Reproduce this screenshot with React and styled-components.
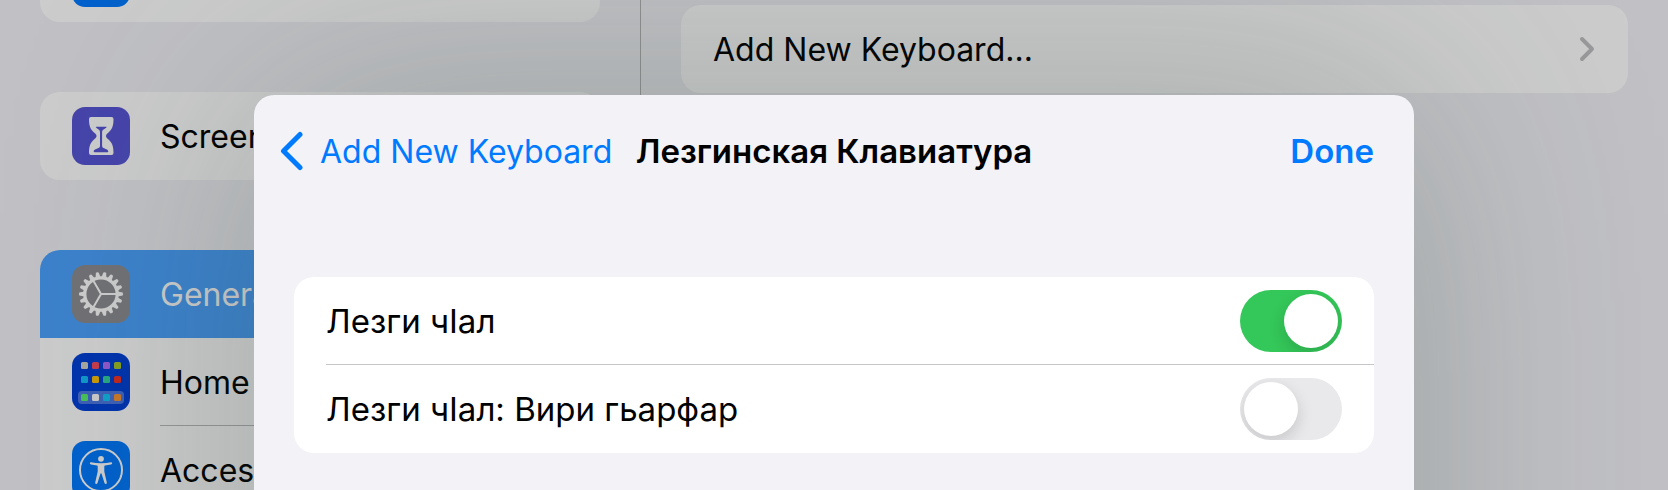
import React, { useState } from "react";
import styled, { createGlobalStyle } from "styled-components";

const GlobalStyle = createGlobalStyle`
  *, *::before, *::after { box-sizing: border-box; }
  body {
    margin: 0;
    background: #f2f2f7;
    color: #000;
    font-family: Inter, "Liberation Sans", sans-serif;
    font-size: 32px;
    line-height: 40px;
  }
`;

const Screen = styled.div`
  position: relative;
  display: flex;
  height: 100vh;
  overflow: hidden;
`;

const Sidebar = styled.nav`
  flex: 0 0 641px;
  border-right: 1px solid #b4b4b6;
  padding: 0 40px;
  overflow: hidden;
`;

/* The list is scrolled, so its first card is partly above the window. */
const SidebarList = styled.div`
  display: flex;
  flex-direction: column;
  gap: 70px;
  margin-top: -66px;
`;

const Detail = styled.main`
  flex: 1;
  min-width: 0;
  padding: 5px 40px;
`;

const Card = styled.div`
  background: #fff;
  border-radius: 20px;
  overflow: hidden;
`;

const NavRow = styled.a`
  display: flex;
  align-items: center;
  gap: 30px;
  height: 88px;
  padding-left: 32px;
  color: ${(p) => (p.$selected ? "#fff" : "#000")};
  background: ${(p) => (p.$selected ? "#4ca3ff" : "transparent")};
  text-decoration: none;
  white-space: nowrap;
`;

const NavLabel = styled.span`
  flex: 1;
  display: flex;
  align-items: center;
  align-self: stretch;
  padding-top: 2px;
  border-bottom: ${(p) => (p.$divided ? "1px solid #bcbcbe" : "none")};
`;

const RowLabel = styled.span`
  padding-top: 2px;
`;

const AppIcon = styled.svg.attrs({ viewBox: "0 0 58 58", "aria-hidden": true })`
  flex: none;
  width: 58px;
  height: 58px;
  border-radius: 13px;
  background: ${(p) => p.$color};
`;

const DetailRow = styled.button`
  display: flex;
  align-items: center;
  justify-content: space-between;
  width: 100%;
  height: 88px;
  padding: 0 32px;
  border: 0;
  background: none;
  color: inherit;
  font: inherit;
`;

const Backdrop = styled.div`
  position: absolute;
  inset: 0;
  background: rgba(0, 0, 0, 0.2);
`;

const Sheet = styled.section`
  position: absolute;
  top: 95px;
  left: 0;
  right: 0;
  max-width: 1160px;
  min-height: 200vh;
  margin: 0 auto;
  padding: 0 40px;
  border-radius: 20px;
  background: #f2f2f7;
  box-shadow: 0 0 250px rgba(50, 74, 64, 0.28);
`;

const SheetHeader = styled.header`
  display: grid;
  grid-template-columns: 1fr auto 1fr;
  align-items: center;
  height: 112px;
  margin-bottom: 70px;
  white-space: nowrap;
`;

const SheetTitle = styled.h1`
  margin: 0;
  font-size: 33px;
  font-weight: 600;
`;

const BackButton = styled.button`
  display: flex;
  align-items: center;
  gap: 16px;
  justify-self: start;
  margin-left: -16px;
  padding: 0;
  border: 0;
  background: none;
  color: #007aff;
  font: inherit;
`;

const DoneButton = styled.button`
  justify-self: end;
  padding: 0;
  border: 0;
  background: none;
  color: #007aff;
  font: inherit;
  font-size: 33px;
  font-weight: 600;
`;

const SwitchRow = styled.label`
  display: flex;
  align-items: center;
  justify-content: space-between;
  height: 88px;
  margin-left: 32px;
  padding-right: 32px;
  font-size: 33px;
  & + & { box-shadow: 0 -1px #c6c6c8; }
`;

const Switch = styled.input.attrs({ type: "checkbox", role: "switch" })`
  appearance: none;
  display: flex;
  width: 102px;
  height: 62px;
  margin: 0;
  padding: 4px;
  border-radius: 31px;
  overflow: hidden;
  background: #e9e9eb;
  &::before {
    content: "";
    width: 54px;
    height: 54px;
    border-radius: 50%;
    background: #fff;
    box-shadow: 0 6px 16px rgba(0, 0, 0, 0.15);
  }
  &:checked {
    justify-content: flex-end;
    background: #34c759;
  }
`;

const Chevron = styled.svg`
  flex: none;
  fill: none;
  stroke: ${(p) => p.$color};
  stroke-linecap: round;
  stroke-linejoin: round;
`;

const HourglassIcon = () => (
  <AppIcon $color="#5856d6">
    <path
      fill="#fff"
      d="M19 10h20.500q2 0 2 2c0 7-1.500 10.500-5 13.500-2 1.700-2.500 2.300-2.500 3.500s.5 1.800 2.500 3.500c3.500 3 5 6.500 5 13.500q0 2-2 2H19q-2 0-2-2c0-7 1.500-10.500 5-13.500 2-1.700 2.500-2.300 2.500-3.500s-.5-1.800-2.500-3.500c-3.500-3-5-6.500-5-13.500q0-2 2-2z"
    />
    <path
      fill="#5856d6"
      d="M24.500 19.700h9.700q.8 0 .2.800c-1.500 1.500-4.300 2-4.300 4.500v14c0 3 6.200 2.500 6.200 5.500q0 .7-1 .7H22.700q-1 0-1-.7c0-3 6.300-2.500 6.300-5.500V25c0-2.500-2.500-3-4-4.500q-.5-.8.500-.8z"
    />
  </AppIcon>
);

const TEETH = Array.from({ length: 18 }, (_, i) => i * 20);

const GearIcon = () => (
  <AppIcon $color="#8e8e93">
    <g fill="none" stroke="#fff">
      <circle cx="29" cy="29" r="16.200" strokeWidth="3.200" />
      <path d="M29 29h15M29 29l-7.500-13M29 29l-7.500 13" strokeWidth="2" />
    </g>
    {TEETH.map((angle) => (
      <path
        key={angle}
        fill="#fff"
        d="M45.500 26.400l5.200 1.200q.8 1.400 0 2.800L45.500 31.600z"
        transform={`rotate(${angle} 29 29)`}
      />
    ))}
  </AppIcon>
);

const HOME_TILES = [
  [9, ["#d2d2c8", "#f54b5f", "#b46df9", "#a8c82b"]],
  [23, ["#14befa", "#fabe0a", "#32d2a0", "#f03228"]],
  [41, ["#5af06e", "#fafafa", "#14c8fa", "#fa9632"]],
];

const HomeIcon = () => (
  <AppIcon $color="#0040d9">
    <rect x="6" y="38" width="46" height="13" rx="4" fill="#fff" fillOpacity="0.3" />
    {HOME_TILES.map(([y, colors]) =>
      colors.map((color, i) => (
        <rect key={color} x={9 + i * 11} y={y} width="7" height="7" rx="1.500" fill={color} />
      ))
    )}
  </AppIcon>
);

const AccessibilityIcon = () => (
  <AppIcon $color="#007aff">
    <circle cx="29" cy="29" r="21" fill="none" stroke="#fff" strokeWidth="2" />
    <circle cx="29" cy="17.800" r="2.900" fill="#fff" />
    <path
      fill="#fff"
      d="M19 21.300q4.500 1 10 1t10-1q1.200 0 1.200 1t-1.200 1.200l-6 1q-.7.200-.7 1v5l2.500 11q.2 1.300-.8 1.500t-1.500-1l-3-9.500h-1l-3 9.500q-.5 1.200-1.500 1t-.8-1.500l2.500-11v-5q0-.8-.7-1l-6-1q-1.200-.2-1.200-1.200t1.200-1z"
    />
  </AppIcon>
);

export default function App() {
  const [enabled, setEnabled] = useState({ standard: true, all: false });
  const toggle = (key) => () => setEnabled((s) => ({ ...s, [key]: !s[key] }));

  return (
    <>
      <GlobalStyle />
      <Screen>
        <Sidebar>
          <SidebarList>
            <Card>
              <NavRow as="div">
                <AppIcon $color="#007aff" />
              </NavRow>
            </Card>
            <Card>
              <NavRow href="#screen-time">
                <HourglassIcon />
                <NavLabel>Screen Time</NavLabel>
              </NavRow>
            </Card>
            <Card>
              <NavRow href="#general" $selected>
                <GearIcon />
                <NavLabel>General</NavLabel>
              </NavRow>
              <NavRow href="#home">
                <HomeIcon />
                <NavLabel $divided>Home Screen</NavLabel>
              </NavRow>
              <NavRow href="#accessibility">
                <AccessibilityIcon />
                <NavLabel>Accessibility</NavLabel>
              </NavRow>
            </Card>
          </SidebarList>
        </Sidebar>
        <Detail>
          <Card>
            <DetailRow type="button">
              <RowLabel>Add New Keyboard...</RowLabel>
              <Chevron $color="#c0c0c2" width="18" height="26" viewBox="0 0 18 26" strokeWidth="4">
                <path d="M4 3l10 10L4 23" />
              </Chevron>
            </DetailRow>
          </Card>
        </Detail>
        <Backdrop />
        <Sheet role="dialog" aria-labelledby="sheet-title">
          <SheetHeader>
            <BackButton type="button">
              <Chevron $color="#007aff" width="26" height="40" viewBox="0 0 26 40" strokeWidth="5">
                <path d="M22 3.500L5.500 20L22 36.500" />
              </Chevron>
              <RowLabel>Add New Keyboard</RowLabel>
            </BackButton>
            <SheetTitle id="sheet-title">Лезгинская Клавиатура</SheetTitle>
            <DoneButton type="button">Done</DoneButton>
          </SheetHeader>
          <Card>
            <SwitchRow>
              Лезги чӀал
              <Switch checked={enabled.standard} onChange={toggle("standard")} />
            </SwitchRow>
            <SwitchRow>
              Лезги чӀал: Вири гьарфар
              <Switch checked={enabled.all} onChange={toggle("all")} />
            </SwitchRow>
          </Card>
        </Sheet>
      </Screen>
    </>
  );
}
